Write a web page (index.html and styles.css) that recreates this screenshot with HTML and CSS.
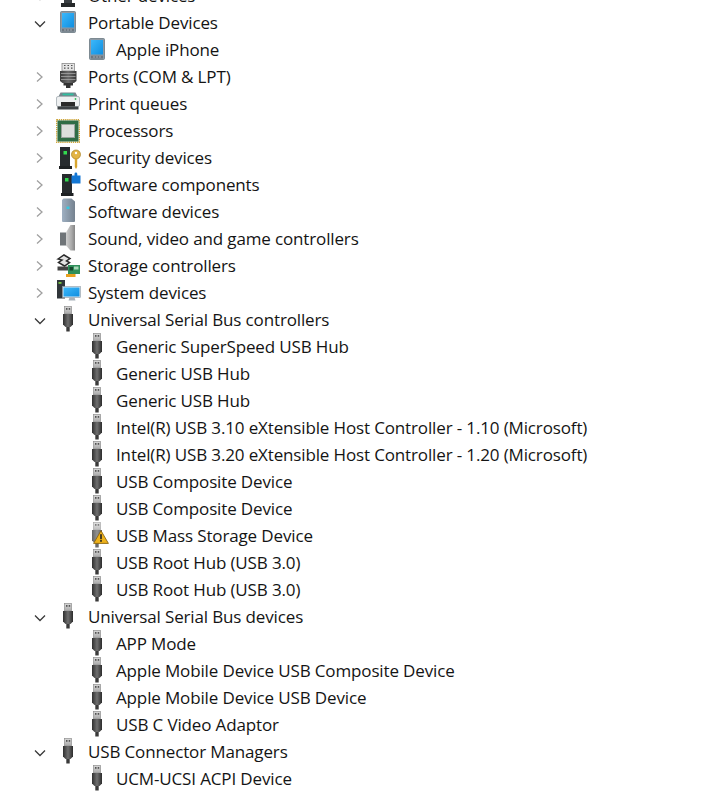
FILE: index.html
```html
<!DOCTYPE html>
<html lang="en">
<head>
<meta charset="utf-8">
<title>Device Manager</title>
<link rel="stylesheet" href="styles.css">
</head>
<body>
<svg class="defs" width="0" height="0" aria-hidden="true">
  <defs>
    <linearGradient id="g-usb" x1="0" y1="0" x2="1" y2="0"><stop offset="0" stop-color="#2f2f2f"/><stop offset=".5" stop-color="#6f6f6f"/><stop offset="1" stop-color="#2c2c2c"/></linearGradient>
    <linearGradient id="g-cap" x1="0" y1="0" x2="0" y2="1"><stop offset="0" stop-color="#d8d8d8"/><stop offset="1" stop-color="#a8a8a8"/></linearGradient>
    <linearGradient id="g-tower" x1="0" y1="0" x2="1" y2="0"><stop offset="0" stop-color="#9fb0c2"/><stop offset="1" stop-color="#75828f"/></linearGradient>
    <linearGradient id="g-screen" x1="0" y1="0" x2="1" y2="1"><stop offset="0" stop-color="#3cb8fa"/><stop offset="1" stop-color="#0f8ee0"/></linearGradient>
    <linearGradient id="g-cone" x1="0" y1="0" x2="1" y2="0"><stop offset="0" stop-color="#cfcfcf"/><stop offset=".6" stop-color="#ababab"/><stop offset="1" stop-color="#858585"/></linearGradient>
    <linearGradient id="g-port" x1="0" y1="0" x2="1" y2="0"><stop offset="0" stop-color="#3c3c3c"/><stop offset=".5" stop-color="#6a6a6a"/><stop offset="1" stop-color="#383838"/></linearGradient>
    <symbol id="i-usb" viewBox="0 0 24 24">
      <rect x="8.500" y="-1.500" width="7" height="7.500" fill="url(#g-cap)" stroke="#8f8f8f" stroke-width=".7"/>
      <rect x="10" y="0" width="1.500" height="1.800" fill="#555"/><rect x="12.700" y="0" width="1.500" height="1.800" fill="#555"/>
      <path d="M7 6h10v10.500l-2.500 2.500h-5L7 16.500z" fill="url(#g-usb)"/>
      <rect x="10.300" y="19" width="3.400" height="4.500" fill="#3a3a3a"/>
    </symbol>
    <symbol id="i-phone" viewBox="0 0 24 24">
      <rect x="4.500" y="0.500" width="15" height="21" rx="1" fill="#8d9aa5" stroke="#6b7882" stroke-width=".8"/>
      <rect x="6" y="2" width="12" height="14.500" fill="url(#g-screen)"/>
      <rect x="6" y="17.700" width="12" height="2.800" fill="#6d7780"/>
      <path d="M8 19h2M11 19h2M14 19h2" stroke="#aeb6bc" stroke-width=".8"/>
    </symbol>
    <symbol id="i-port" viewBox="0 0 24 24">
      <rect x="6" y="-1.500" width="12.500" height="7.500" fill="#e4e4e4" stroke="#8a8a8a" stroke-width=".8"/>
      <path d="M8 0.500h1.500M11.500 0.500h1.500M15 0.500h1.500M8 3.200h1.500M11.500 3.200h1.500M15 3.200h1.500" stroke="#4f4f4f" stroke-width="1.200"/>
      <path d="M4 6h16.500v10l-2.500 2H6.500L4 16z" fill="url(#g-port)"/>
      <path d="M5 8.500h14.500M5 11.500h14.500M5 14.500h14.500" stroke="#a4a4a4" stroke-width=".8"/>
      <path d="M7.500 18h9.500v2.500h-2.500V23h-4.500v-2.500H7.500z" fill="#333"/>
    </symbol>
    <symbol id="i-print" viewBox="0 0 24 24">
      <path d="M4.500 0.500h15l2 4h-19z" fill="#77858c"/>
      <rect x="6.500" y="1.500" width="11" height="1.800" fill="#2fbfa0"/>
      <rect x="0.500" y="4.500" width="23" height="10" rx="1.500" fill="#eef0f1" stroke="#9aa2a8" stroke-width=".7"/>
      <circle cx="19.500" cy="7" r=".9" fill="#38c060"/>
      <rect x="5" y="10" width="14" height="4.500" fill="#2a2a2a"/>
      <rect x="1.500" y="14.500" width="21" height="3" fill="#3d4245"/>
    </symbol>
    <symbol id="i-cpu" viewBox="0 0 24 24">
      <rect x="0.700" y="0.700" width="22.600" height="22.600" fill="none" stroke="#cda53a" stroke-width="1.400" stroke-dasharray="1.300 .8"/>
      <rect x="1.500" y="1.500" width="21" height="21" fill="#2f6d45"/>
      <rect x="5.500" y="5.500" width="13" height="13" fill="#dcdfdc" stroke="#9aa59e"/>
    </symbol>
    <symbol id="i-sec" viewBox="0 0 24 24">
      <rect x="4" y="1" width="10" height="19" fill="#272b2e"/>
      <rect x="7.500" y="5" width="3.500" height="3.500" fill="#32d94f"/>
      <path d="M3 20h13v3H3z" fill="#1e2123"/>
      <circle cx="20" cy="8.500" r="4.500" fill="#e3b445" stroke="#a87f20" stroke-width=".7"/>
      <circle cx="20" cy="7" r="1.200" fill="#fff"/>
      <path d="M18.800 12.500h2.400v8.500l-1.200 2-1.200-2z" fill="#d9a62f"/>
    </symbol>
    <symbol id="i-soft" viewBox="0 0 24 24">
      <rect x="6" y="1" width="10" height="19" fill="#272b2e"/>
      <rect x="9" y="5" width="3.500" height="3.500" fill="#32d94f"/>
      <path d="M5 20h12.500v3H5z" fill="#1e2123"/>
      <path d="M15.500 2.500h3V1a1.400 1.400 0 0 1 2.800 0v1.500h3.200v8h-9z" fill="#1477d4"/>
    </symbol>
    <symbol id="i-tower" viewBox="0 0 24 24">
      <path d="M7.500-1.500h8l3.500 3V21a1 1 0 0 1-1 1H7a1 1 0 0 1-1-1V0z" fill="url(#g-tower)"/>
      <rect x="10.500" y="6.500" width="3" height="2.500" fill="#38c8e0"/>
    </symbol>
    <symbol id="i-sound" viewBox="0 0 24 24">
      <rect x="4" y="5.500" width="6" height="13" fill="#6f7478"/>
      <path d="M10 5.500L14.500-2H19v25.500h-4.500L10 18.500z" fill="url(#g-cone)"/>
    </symbol>
    <symbol id="i-stor" viewBox="0 0 24 24">
      <path d="M2 5L8 1l6 3.500-3.500 2.500 3 1.500-5 3.500-6-3.500 3.500-2.500z" fill="#e4e4e4" stroke="#2c2c2c" stroke-width="1.500"/>
      <path d="M1.500 12.500h11v4h-11z" fill="#444"/>
      <rect x="12" y="11" width="12" height="9" fill="#2f8f5a"/>
      <rect x="13.500" y="13" width="3.500" height="3.500" fill="#17472e"/>
      <rect x="18" y="12.500" width="4.500" height="3" fill="#a8d8b8"/>
      <rect x="10" y="20" width="9.500" height="3" fill="#e8a020"/>
    </symbol>
    <symbol id="i-sys" viewBox="0 0 24 24">
      <rect x="1" y="-1" width="8" height="18.500" fill="#30363a"/>
      <rect x="2.500" y="1" width="3" height="1.800" fill="#7ac943"/>
      <rect x="6.500" y="5.500" width="18" height="11" fill="#dfe9f0" stroke="#8a98a3" stroke-width=".6"/>
      <rect x="7.500" y="6.500" width="16" height="9" fill="url(#g-screen)"/>
      <path d="M13.500 16.500h5l1 3h-7z" fill="#a8b2ba"/>
    </symbol>
    <symbol id="i-warn" viewBox="0 0 16 14">
      <path d="M8 .7L15.400 13.400H.6z" fill="#eeb21b" stroke="#8a6410" stroke-width=".9"/>
      <rect x="7.200" y="4.200" width="1.600" height="5" fill="#222"/>
      <rect x="7.200" y="10" width="1.600" height="1.800" fill="#222"/>
    </symbol>
    <symbol id="i-other" viewBox="0 0 24 24">
      <rect x="8" y="0" width="8" height="19" fill="#3a3f43"/>
      <rect x="5" y="19" width="14" height="4" fill="#26292b"/>
    </symbol>
  </defs>
</svg>

<main class="tree">
  <div class="row"><span class="chev"><svg viewBox="0 0 12 12"><path d="M2 4.500l5 5 5-5"/></svg></span><svg class="icon"><use href="#i-other"/></svg><span class="label">Other devices</span></div>
  <div class="row"><span class="chev"><svg viewBox="0 0 12 12"><path d="M2 4.500l5 5 5-5"/></svg></span><svg class="icon"><use href="#i-phone"/></svg><span class="label">Portable Devices</span></div>
  <div class="row child"><svg class="icon"><use href="#i-phone"/></svg><span class="label">Apple iPhone</span></div>
  <div class="row"><span class="chev closed"><svg viewBox="0 0 12 12"><path d="M4 1.500l5 4.500-5 4.500"/></svg></span><svg class="icon"><use href="#i-port"/></svg><span class="label">Ports (COM &amp; LPT)</span></div>
  <div class="row"><span class="chev closed"><svg viewBox="0 0 12 12"><path d="M4 1.500l5 4.500-5 4.500"/></svg></span><svg class="icon"><use href="#i-print"/></svg><span class="label">Print queues</span></div>
  <div class="row"><span class="chev closed"><svg viewBox="0 0 12 12"><path d="M4 1.500l5 4.500-5 4.500"/></svg></span><svg class="icon"><use href="#i-cpu"/></svg><span class="label">Processors</span></div>
  <div class="row"><span class="chev closed"><svg viewBox="0 0 12 12"><path d="M4 1.500l5 4.500-5 4.500"/></svg></span><svg class="icon"><use href="#i-sec"/></svg><span class="label">Security devices</span></div>
  <div class="row"><span class="chev closed"><svg viewBox="0 0 12 12"><path d="M4 1.500l5 4.500-5 4.500"/></svg></span><svg class="icon"><use href="#i-soft"/></svg><span class="label">Software components</span></div>
  <div class="row"><span class="chev closed"><svg viewBox="0 0 12 12"><path d="M4 1.500l5 4.500-5 4.500"/></svg></span><svg class="icon"><use href="#i-tower"/></svg><span class="label">Software devices</span></div>
  <div class="row"><span class="chev closed"><svg viewBox="0 0 12 12"><path d="M4 1.500l5 4.500-5 4.500"/></svg></span><svg class="icon"><use href="#i-sound"/></svg><span class="label">Sound, video and game controllers</span></div>
  <div class="row"><span class="chev closed"><svg viewBox="0 0 12 12"><path d="M4 1.500l5 4.500-5 4.500"/></svg></span><svg class="icon"><use href="#i-stor"/></svg><span class="label">Storage controllers</span></div>
  <div class="row"><span class="chev closed"><svg viewBox="0 0 12 12"><path d="M4 1.500l5 4.500-5 4.500"/></svg></span><svg class="icon"><use href="#i-sys"/></svg><span class="label">System devices</span></div>
  <div class="row"><span class="chev"><svg viewBox="0 0 12 12"><path d="M2 4.500l5 5 5-5"/></svg></span><svg class="icon"><use href="#i-usb"/></svg><span class="label">Universal Serial Bus controllers</span></div>
  <div class="row child"><svg class="icon"><use href="#i-usb"/></svg><span class="label">Generic SuperSpeed USB Hub</span></div>
  <div class="row child"><svg class="icon"><use href="#i-usb"/></svg><span class="label">Generic USB Hub</span></div>
  <div class="row child"><svg class="icon"><use href="#i-usb"/></svg><span class="label">Generic USB Hub</span></div>
  <div class="row child"><svg class="icon"><use href="#i-usb"/></svg><span class="label">Intel(R) USB 3.10 eXtensible Host Controller - 1.10 (Microsoft)</span></div>
  <div class="row child"><svg class="icon"><use href="#i-usb"/></svg><span class="label">Intel(R) USB 3.20 eXtensible Host Controller - 1.20 (Microsoft)</span></div>
  <div class="row child"><svg class="icon"><use href="#i-usb"/></svg><span class="label">USB Composite Device</span></div>
  <div class="row child"><svg class="icon"><use href="#i-usb"/></svg><span class="label">USB Composite Device</span></div>
  <div class="row child"><span class="icon-wrap"><svg class="icon icon-faded"><use href="#i-usb"/></svg><svg class="badge"><use href="#i-warn"/></svg></span><span class="label">USB Mass Storage Device</span></div>
  <div class="row child"><svg class="icon"><use href="#i-usb"/></svg><span class="label">USB Root Hub (USB 3.0)</span></div>
  <div class="row child"><svg class="icon"><use href="#i-usb"/></svg><span class="label">USB Root Hub (USB 3.0)</span></div>
  <div class="row"><span class="chev"><svg viewBox="0 0 12 12"><path d="M2 4.500l5 5 5-5"/></svg></span><svg class="icon"><use href="#i-usb"/></svg><span class="label">Universal Serial Bus devices</span></div>
  <div class="row child"><svg class="icon"><use href="#i-usb"/></svg><span class="label">APP Mode</span></div>
  <div class="row child"><svg class="icon"><use href="#i-usb"/></svg><span class="label">Apple Mobile Device USB Composite Device</span></div>
  <div class="row child"><svg class="icon"><use href="#i-usb"/></svg><span class="label">Apple Mobile Device USB Device</span></div>
  <div class="row child"><svg class="icon"><use href="#i-usb"/></svg><span class="label">USB C Video Adaptor</span></div>
  <div class="row"><span class="chev"><svg viewBox="0 0 12 12"><path d="M2 4.500l5 5 5-5"/></svg></span><svg class="icon"><use href="#i-usb"/></svg><span class="label">USB Connector Managers</span></div>
  <div class="row child"><svg class="icon"><use href="#i-usb"/></svg><span class="label">UCM-UCSI ACPI Device</span></div>
</main>
</body>
</html>
```

FILE: styles.css
```css
html, body {
  margin: 0;
  height: 100%;
  overflow: hidden;
  background: #fff;
}
symbol {
  overflow: visible;
}
.defs {
  display: block;
  height: 0;
}
.tree {
  display: flex;
  flex-direction: column;
  margin-top: -18px;
  padding-left: 33px;
  font-family: "Open Sans", "Liberation Sans", sans-serif;
  font-size: 17px;
  letter-spacing: -0.14px;
  color: #141414;
}
.row {
  display: flex;
  align-items: center;
  flex: none;
  height: 27px;
}
.row.child {
  padding-left: 52px;
}
.row.child .icon {
  margin-right: 7px;
}
.chev {
  display: flex;
  flex: none;
  width: 12px;
  height: 12px;
  margin-right: 11px;
}
.chev svg {
  width: 12px;
  height: 12px;
  overflow: visible;
  fill: none;
  stroke: #3a3a3a;
  stroke-width: 1.3;
}
.chev.closed svg {
  stroke: #a0a0a0;
}
.icon {
  flex: none;
  width: 24px;
  height: 24px;
  margin-right: 8px;
  overflow: visible;
}
.icon-faded {
  opacity: 0.75;
}
.icon-wrap {
  position: relative;
  display: flex;
  flex: none;
}
.badge {
  position: absolute;
  left: 8px;
  top: 6px;
  width: 16px;
  height: 14px;
}
.label {
  white-space: nowrap;
}
```
